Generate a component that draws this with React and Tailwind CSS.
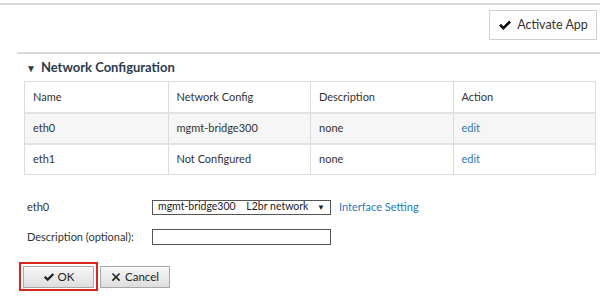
import React from "react";

const font = { fontFamily: 'Lato, "Liberation Sans", sans-serif' };

function Check({ className }) {
  return (
    <svg viewBox="0 0 16 16" className={className} fill="currentColor">
      <path d="M1.2 8.8 L3.4 6.6 L6.2 9.4 L12.7 2.9 L14.9 5.1 L6.2 13.8 Z" />
    </svg>
  );
}

function Cross({ className }) {
  return (
    <svg viewBox="0 0 16 16" className={className} fill="currentColor">
      <path d="M3.2 1.4 L8 6.2 L12.8 1.4 L14.6 3.2 L9.8 8 L14.6 12.8 L12.8 14.6 L8 9.8 L3.2 14.6 L1.4 12.8 L6.2 8 L1.4 3.2 Z" />
    </svg>
  );
}

const rows = [
  { name: "eth0", config: "mgmt-bridge300", desc: "none", shade: true },
  { name: "eth1", config: "Not Configured", desc: "none", shade: false },
];

export default function App() {
  return (
    <div className="w-[600px] h-[303px] bg-white text-[#333] overflow-hidden" style={font}>
      <div className="h-[3px]" />
      <div className="h-[2px] bg-[#d6d9dd]" />
      <div className="flex justify-end pr-[3px] pt-[5px] h-[47px]">
        <button className="w-[108px] h-[30px] border border-[#cfcfcf] bg-white flex items-center justify-center gap-[5px] text-[12.5px] text-[#333]">
          <Check className="w-[14px] h-[14px] text-[#111]" />
          Activate App
        </button>
      </div>
      <div className="ml-[17px] h-[2px] bg-[#d6d9dd]" />
      <div className="flex items-center h-[27px] pl-[26px] gap-[5px]">
        <span className="text-[10px] text-[#2b3b4e] leading-none">▼</span>
        <span className="text-[13px] font-bold text-[#2b3b4e]">Network Configuration</span>
      </div>
      <div className="ml-[24px] w-[572px] border border-[#dcdcdc]">
        <div className="grid grid-cols-4 h-[30px] text-[11px]">
          {["Name", "Network Config", "Description", "Action"].map((h, i) => (
            <div key={h} className={`flex items-center pl-[8px] ${i > 0 ? "border-l border-[#dcdcdc]" : ""}`}>
              {h}
            </div>
          ))}
        </div>
        {rows.map((r) => (
          <div
            key={r.name}
            className={`grid grid-cols-4 h-[31px] text-[11px] border-t-2 border-[#e2e2e2] ${r.shade ? "bg-[#f6f6f6]" : "bg-white"}`}
          >
            <div className="flex items-center pl-[8px]">{r.name}</div>
            <div className="flex items-center pl-[8px] border-l border-[#dcdcdc]">{r.config}</div>
            <div className="flex items-center pl-[8px] border-l border-[#dcdcdc]">{r.desc}</div>
            <div className="flex items-center pl-[8px] border-l border-[#dcdcdc] text-[#2a7ab8]">edit</div>
          </div>
        ))}
      </div>
      <div className="pl-[27px] pt-[24px] text-[11px]">
        <div className="flex items-center h-[16px]">
          <span className="w-[125px]">eth0</span>
          <div className="w-[179px] h-[15px] border border-[#555] flex items-center justify-between pl-[5px] pr-[5px] text-[10.5px] text-[#222] whitespace-nowrap">
            <span>mgmt-bridge300&nbsp;&nbsp;&nbsp; L2br network</span>
            <span className="text-[8px]">▼</span>
          </div>
          <span className="ml-[8px] text-[#2a7ab8]">Interface Setting</span>
        </div>
        <div className="flex items-center h-[16px] mt-[14px]">
          <span className="w-[125px] whitespace-nowrap">Description (optional):</span>
          <div className="w-[179px] h-[16px] border border-[#555] bg-white" />
        </div>
      </div>
      <div className="flex items-center pl-[19px] pt-[17px] gap-[2px]">
        <div className="border-2 border-[#d9261c] w-[79px] h-[29px] flex items-center justify-center">
          <button className="w-[71px] h-[22px] border border-[#a9a9a9] bg-gradient-to-b from-[#f7f7f7] to-[#dedede] flex items-center justify-center gap-[3px] text-[11.5px] text-[#222]">
            <Check className="w-[12px] h-[12px]" />
            OK
          </button>
        </div>
        <button className="w-[70px] h-[22px] border border-[#a9a9a9] bg-gradient-to-b from-[#f7f7f7] to-[#dedede] flex items-center justify-center gap-[4px] text-[11.5px] text-[#222]">
          <Cross className="w-[10px] h-[10px]" />
          Cancel
        </button>
      </div>
    </div>
  );
}
